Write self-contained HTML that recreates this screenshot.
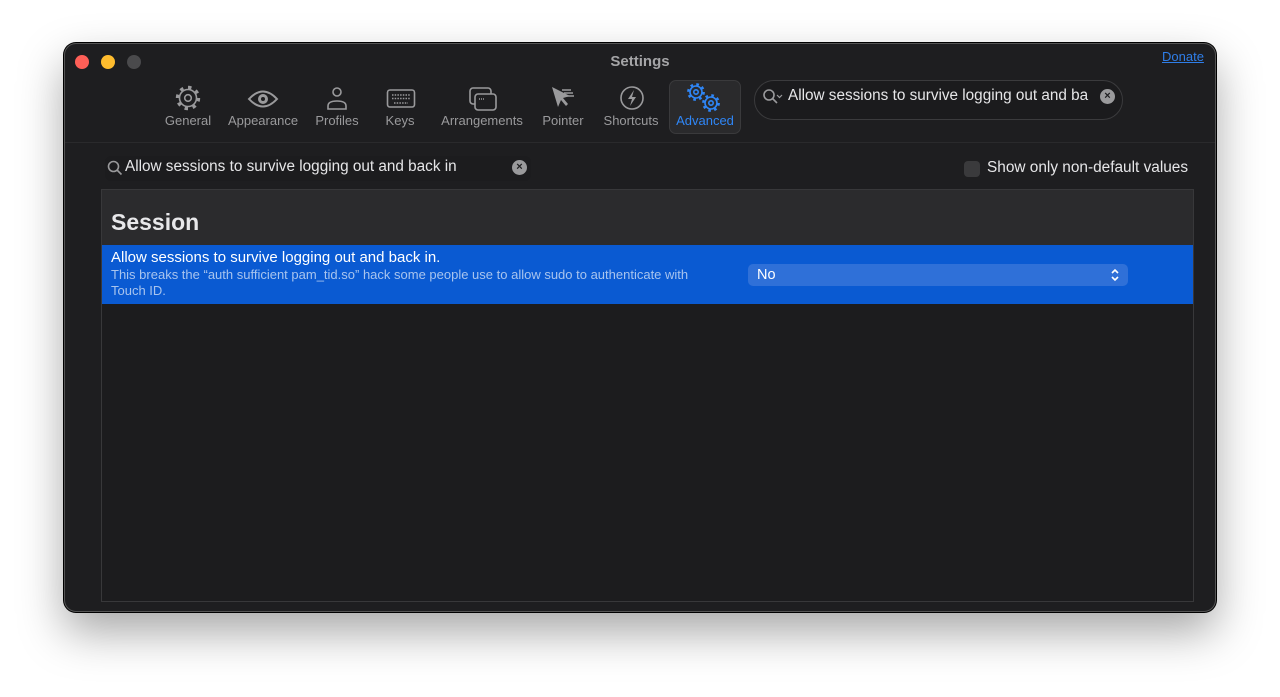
<!DOCTYPE html>
<html><head><meta charset="utf-8"><style>
*{margin:0;padding:0;box-sizing:border-box}
body{width:1280px;height:697px;background:#fff;font-family:"Liberation Sans",sans-serif;position:relative;overflow:hidden}
.win{position:absolute;left:64px;top:43px;width:1152px;height:569px;background:#1e1e20;border-radius:12px;border:1px solid #555;box-shadow:0 20px 45px rgba(0,0,0,.35),0 0 0 1px #000}
.abs{position:absolute}
.dot{position:absolute;top:11px;width:14px;height:14px;border-radius:50%}
.t{color:#9a9a9c;font-size:13px;position:absolute;top:69px;text-align:center}
svg.i{position:absolute;fill:none;stroke:#9a9a9c;stroke-width:1.6}
</style></head><body>
<div class="win">
 <div class="dot" style="left:10px;background:#fe5f57"></div>
 <div class="dot" style="left:36px;background:#febc2e"></div>
 <div class="dot" style="left:62px;background:#4a4a4c"></div>
 <div class="abs" style="left:0;width:1150px;top:9px;text-align:center;color:#a5a5a7;font-weight:bold;font-size:15px">Settings</div>
 <div class="abs" style="left:1097px;top:5px;color:#2f7ee8;font-size:13px;text-decoration:underline">Donate</div>
 <div class="abs" style="left:604px;top:36px;width:72px;height:54px;background:#2a2a2c;border:1px solid #3a3a3c;border-radius:7px"></div>
 <svg class="i" style="left:109px;top:40px" width="28" height="28" viewBox="0 0 28 28"><circle cx="14" cy="14" r="10.5" stroke-width="3.4" stroke-dasharray="3.4 4.8"/><circle cx="14" cy="14" r="8.5"/><circle cx="14" cy="14" r="3.3"/></svg>
 <svg class="i" style="left:182px;top:44px" width="32" height="22" viewBox="0 0 32 22"><path d="M2 11Q16-4 30 11Q16 26 2 11Z" stroke-width="2"/><circle cx="16" cy="11" r="5" fill="#9a9a9c" stroke="none"/><circle cx="16" cy="11" r="2" fill="#1e1e20" stroke="none"/></svg>
 <svg class="i" style="left:261px;top:42px" width="22" height="26" viewBox="0 0 22 26"><circle cx="11" cy="6" r="4"/><path d="M2 23v-3q0-5 9-5t9 5v3z"/></svg>
 <svg class="i" style="left:321px;top:44px" width="30" height="22" viewBox="0 0 30 22"><rect x="1.5" y="2" width="27" height="17" rx="2.5"/><path d="M6 7h18M6 10.5h18M8 15h14" stroke-dasharray="1.5 1.2"/></svg>
 <svg class="i" style="left:403px;top:41px" width="30" height="28" viewBox="0 0 30 28"><rect x="2" y="3" width="21" height="16" rx="3"/><rect x="7" y="9" width="21" height="16" rx="3" fill="#1e1e20"/><path d="M11 14h6" stroke-dasharray="1 1"/></svg>
 <svg class="i" style="left:484px;top:41px" width="28" height="28" viewBox="0 0 28 28"><path d="M3 2L9 22L12 15L17 21L19 19L14 13L21 11Z" fill="#9a9a9c" stroke="none"/><path d="M13 5h9M15 8h9M17 11h8" stroke-width="1.4"/></svg>
 <svg class="i" style="left:554px;top:41px" width="26" height="26" viewBox="0 0 26 26"><circle cx="13" cy="13" r="11"/><path d="M15 5L9 14h4l-2 7 6-9h-4z" fill="#9a9a9c" stroke="none"/></svg>
 <svg class="i" style="left:620px;top:38px;stroke:#2f86f6" width="36" height="32" viewBox="0 0 36 32"><circle cx="11" cy="10" r="7.5" stroke-width="2.8" stroke-dasharray="2.6 3.3"/><circle cx="11" cy="10" r="6"/><circle cx="11" cy="10" r="2.2"/><circle cx="26" cy="21" r="7.5" stroke-width="2.8" stroke-dasharray="2.6 3.3"/><circle cx="26" cy="21" r="6"/><circle cx="26" cy="21" r="2.2"/></svg>
 <div class="t" style="left:95px;width:56px">General</div>
 <div class="t" style="left:158px;width:80px">Appearance</div>
 <div class="t" style="left:244px;width:56px">Profiles</div>
 <div class="t" style="left:310px;width:50px">Keys</div>
 <div class="t" style="left:370px;width:94px">Arrangements</div>
 <div class="t" style="left:470px;width:56px">Pointer</div>
 <div class="t" style="left:532px;width:68px">Shortcuts</div>
 <div class="t" style="left:604px;width:72px;color:#2f86f6">Advanced</div>
 <div class="abs" style="left:689px;top:36px;width:369px;height:40px;border:1px solid #3b3b3d;border-radius:20px;background:#1b1b1d"></div>
 <svg class="i" style="left:697px;top:44px" width="24" height="18" viewBox="0 0 24 18"><circle cx="7" cy="7" r="5"/><path d="M10.5 10.5L15 15"/><path d="M15 7l2.5 2.5 2.5-2.5" stroke-width="1.2"/></svg>
 <div class="abs" style="left:723px;top:43px;color:#e6e6e8;font-size:15.3px">Allow sessions to survive logging out and ba</div>
 <div class="abs" style="left:1035px;top:45px;width:15px;height:15px;border-radius:50%;background:#9a9a9c;color:#1e1e20;font-size:11px;font-weight:bold;text-align:center;line-height:15px">×</div>
 <div class="abs" style="left:0;top:98px;width:1150px;height:1px;background:#2a2a2c"></div>
 <div class="abs" style="left:40px;top:112px;width:426px;height:25px;background:#1c1c1e;border-radius:6px"></div>
 <svg class="i" style="left:42px;top:116px" width="16" height="16" viewBox="0 0 16 16"><circle cx="6.5" cy="6.5" r="5"/><path d="M10 10l4.5 4.5"/></svg>
 <div class="abs" style="left:60px;top:114px;color:#e6e6e8;font-size:15.3px">Allow sessions to survive logging out and back in</div>
 <div class="abs" style="left:447px;top:116px;width:15px;height:15px;border-radius:50%;background:#9a9a9c;color:#1e1e20;font-size:11px;font-weight:bold;text-align:center;line-height:15px">×</div>
 <div class="abs" style="left:899px;top:117px;width:16px;height:16px;border-radius:4px;background:#3a3a3c"></div>
 <div class="abs" style="left:922px;top:115px;color:#e6e6e8;font-size:15.4px">Show only non-default values</div>
 <div class="abs" style="left:36px;top:145px;width:1093px;height:413px;background:#1c1c1e;border:1px solid #38383a">
  <div class="abs" style="left:0;top:0;width:1091px;height:55px;background:#2b2b2d"></div>
  <div class="abs" style="left:9px;top:19px;color:#e8e8ea;font-size:23px;font-weight:bold">Session</div>
  <div class="abs" style="left:0;top:55px;width:1091px;height:59px;background:#0a5ad2">
   <div class="abs" style="left:9px;top:4px;color:#fff;font-size:15px">Allow sessions to survive logging out and back in.</div>
   <div class="abs" style="left:9px;top:22px;width:612px;color:#a8c4ee;font-size:13px;line-height:16px">This breaks the “auth sufficient pam_tid.so” hack some people use to allow sudo to authenticate with Touch ID.</div>
   <div class="abs" style="left:646px;top:19px;width:380px;height:22px;background:#2f70d8;border-radius:5px">
    <div class="abs" style="left:9px;top:3px;color:#fff;font-size:14.5px">No</div>
    <svg class="abs" style="left:362px;top:4px" width="10" height="14" viewBox="0 0 10 14" fill="none" stroke="#fff" stroke-width="1.6"><path d="M2 5l3-3 3 3M2 9l3 3 3-3"/></svg>
   </div>
  </div>
 </div>
</div>
</body></html>
